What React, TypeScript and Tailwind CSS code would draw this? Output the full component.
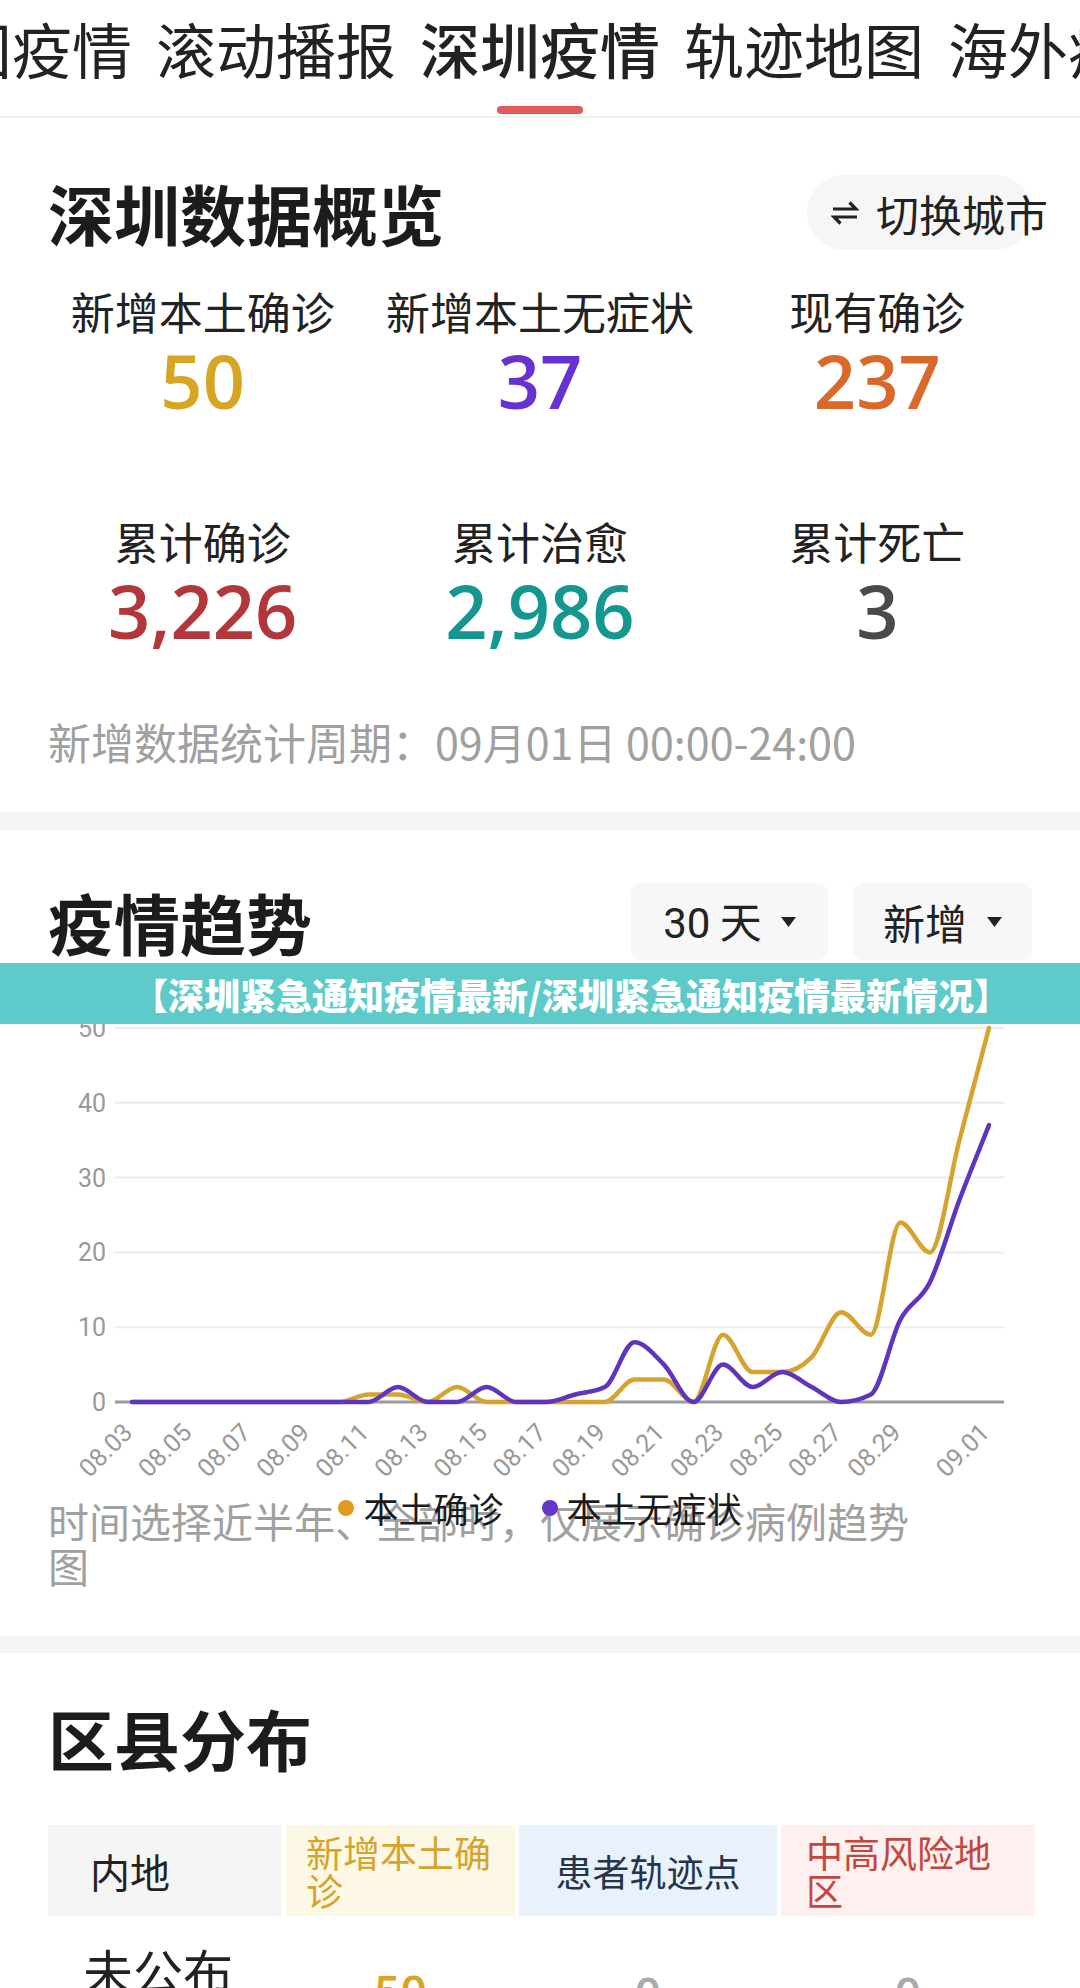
import React from "react";

const gold = [0,0,0,0,0,0,0,0,1,1,0,2,0,0,0,0,0,3,3,0,9,4,4,6,12,9,24,20,35,50];
const purple = [0,0,0,0,0,0,0,0,0,2,0,0,2,0,0,1,2,8,5,0,5,2,4,2,0,1,11,16,27,37];
const dates = ["08.03","08.04","08.05","08.06","08.07","08.08","08.09","08.10","08.11","08.12","08.13","08.14","08.15","08.16","08.17","08.18","08.19","08.20","08.21","08.22","08.23","08.24","08.25","08.26","08.27","08.28","08.29","08.30","08.31","09.01"];

const X0 = 132;
const DX = (989 - 132) / 29;
const Y0 = 402;
const UNIT = 7.48;
const xi = (i: number) => X0 + i * DX;
const yv = (v: number) => Y0 - v * UNIT;

function monotonePath(vals: number[]): string {
  const pts = vals.map((v, i) => [xi(i), yv(v)]);
  const n = pts.length;
  const s: number[] = [];
  for (let k = 0; k < n - 1; k++) {
    s.push((pts[k + 1][1] - pts[k][1]) / (pts[k + 1][0] - pts[k][0]));
  }
  const m: number[] = new Array(n).fill(0);
  m[0] = s[0];
  m[n - 1] = s[n - 2];
  for (let k = 1; k < n - 1; k++) {
    const s0 = s[k - 1];
    const s1 = s[k];
    if (s0 * s1 <= 0) {
      m[k] = 0;
    } else {
      const p = (s0 + s1) / 2;
      m[k] = (Math.sign(s0) + Math.sign(s1)) * Math.min(Math.abs(s0), Math.abs(s1), 0.5 * Math.abs(p));
    }
  }
  let d = `M${pts[0][0].toFixed(1)},${pts[0][1].toFixed(1)}`;
  for (let k = 0; k < n - 1; k++) {
    const h = pts[k + 1][0] - pts[k][0];
    const c1x = pts[k][0] + h / 3;
    const c1y = pts[k][1] + (m[k] * h) / 3;
    const c2x = pts[k + 1][0] - h / 3;
    const c2y = pts[k + 1][1] - (m[k + 1] * h) / 3;
    d += ` C${c1x.toFixed(1)},${c1y.toFixed(1)} ${c2x.toFixed(1)},${c2y.toFixed(1)} ${pts[k + 1][0].toFixed(1)},${pts[k + 1][1].toFixed(1)}`;
  }
  return d;
}

function Chart() {
  const grid = [50, 40, 30, 20, 10];
  const labelIdx = [0, 2, 4, 6, 8, 10, 12, 14, 16, 18, 20, 22, 24, 26, 29];
  return (
    <svg width="1080" height="480" viewBox="0 0 1080 480" className="block">
      {grid.map((g) => (
        <g key={g}>
          <line x1="115" x2="1004" y1={yv(g)} y2={yv(g)} stroke="#ececec" strokeWidth="2" />
          <text x="106" y={yv(g) + 9} textAnchor="end" fontFamily="Roboto" fontSize="25" fill="#999">{g}</text>
        </g>
      ))}
      <line x1="115" x2="1004" y1={Y0} y2={Y0} stroke="#9a9a9a" strokeWidth="3" />
      <text x="106" y={Y0 + 9} textAnchor="end" fontFamily="Roboto" fontSize="25" fill="#999">0</text>
      {labelIdx.map((i) => {
        const x = xi(i) + 2;
        const y = 434;
        return (
          <text key={i} x={x} y={y} textAnchor="end" fontFamily="Roboto" fontSize="25" fill="#999" transform={`rotate(-45 ${x} ${y})`}>
            {dates[i]}
          </text>
        );
      })}
      <path d={monotonePath(gold)} fill="none" stroke="#d6a42e" strokeWidth="4.5" strokeLinejoin="round" strokeLinecap="round" />
      <path d={monotonePath(purple)} fill="none" stroke="#5f35be" strokeWidth="4.5" strokeLinejoin="round" strokeLinecap="round" />
    </svg>
  );
}

function SwapIcon() {
  return (
    <svg width="28" height="28" viewBox="0 0 28 28" fill="none" stroke="#222" strokeWidth="3.2" strokeLinecap="butt" strokeLinejoin="miter" className="shrink-0 block">
      <path d="M2 10 H25 L18.5 3.5" />
      <path d="M26 18 H3 L9.5 24.5" />
    </svg>
  );
}

function Caret() {
  return (
    <svg width="15" height="10" viewBox="0 0 15 10" className="shrink-0 block">
      <path d="M0 0 H15 L7.5 10 Z" fill="#222" />
    </svg>
  );
}

function Stat({ label, value, color }: { label: string; value: string; color: string }) {
  return (
    <div className="flex flex-col items-center">
      <div className="text-[44px] leading-[60px] text-[#222] whitespace-nowrap">{label}</div>
      <div className={`text-[74px] leading-[80px] font-semibold font-['Open_Sans',sans-serif] ${color}`}>{value}</div>
    </div>
  );
}

export default function App() {
  const tabs = ["全国疫情", "滚动播报", "深圳疫情", "轨迹地图", "海外疫情"];
  return (
    <div className="relative w-[1080px] h-[1988px] overflow-hidden bg-white font-['Noto_Sans_CJK_SC',sans-serif] text-[#222]">
      {/* Tab bar */}
      <div className="h-[118px] border-b-2 border-[#f0f0f0] overflow-hidden">
        <div className="flex gap-[24px] ml-[-108px] pt-[18px]">
          {tabs.map((t, i) => (
            <div key={t} className="flex flex-col items-center shrink-0">
              <div className={`text-[60px] leading-[60px] whitespace-nowrap ${i === 2 ? "font-medium" : ""}`}>{t}</div>
              {i === 2 && <div className="mt-[28px] w-[86px] h-[8px] rounded-full bg-[#e25b5b]" />}
            </div>
          ))}
        </div>
      </div>

      {/* Section 1 */}
      <div className="pb-[41px]">
        <div className="mt-[57px] h-[75px] px-[48px] flex items-center justify-between">
          <div className="text-[66px] leading-[75px] font-bold text-[#1c1c1c]">深圳数据概览</div>
          <div className="w-[225px] h-[75px] shrink-0 rounded-full bg-[#f6f6f6] flex items-center pl-[24px] gap-[17px] whitespace-nowrap">
            <SwapIcon />
            <span className="shrink-0 text-[43px] leading-[50px] text-[#222]">切换城市</span>
          </div>
        </div>
        <div className="mt-[31px] px-[34px] grid grid-cols-3 gap-y-[90px]">
          <Stat label="新增本土确诊" value="50" color="text-[#d8a424]" />
          <Stat label="新增本土无症状" value="37" color="text-[#6632d2]" />
          <Stat label="现有确诊" value="237" color="text-[#d8692b]" />
          <Stat label="累计确诊" value="3,226" color="text-[#b3363b]" />
          <Stat label="累计治愈" value="2,986" color="text-[#14978f]" />
          <Stat label="累计死亡" value="3" color="text-[#4a4a4a]" />
        </div>
        <div className="mt-[60px] px-[48px] text-[43px] leading-[60px] text-[#a0a0a0] whitespace-nowrap">
          新增数据统计周期：09月01日 00:00-24:00
        </div>
      </div>

      <div className="h-[18px] bg-[#f5f5f5]" />

      {/* Section 2 */}
      <div className="relative pb-[48px]">
        <div className="mt-[53px] h-[77px] px-[48px] flex items-center justify-between">
          <div className="text-[66px] leading-[77px] font-bold text-[#1c1c1c]">疫情趋势</div>
          <div className="flex gap-[25px]">
            <div className="w-[197px] h-[77px] rounded-[10px] bg-[#f7f7f7] flex items-center justify-center gap-[19px]">
              <span className="text-[42px] leading-[50px]"><span className="font-['Roboto',sans-serif]">30</span> 天</span>
              <Caret />
            </div>
            <div className="w-[179px] h-[77px] rounded-[10px] bg-[#f7f7f7] flex items-center justify-center gap-[20px]">
              <span className="text-[42px] leading-[50px]">新增</span>
              <Caret />
            </div>
          </div>
        </div>
        <div className="relative mt-[40px]">
          <Chart />
          <div className="mt-[18px] ml-[48px] w-[880px] text-[41px] leading-[45px] text-[#a0a0a0]">
            时间选择近半年、全部时，仅展示确诊病例趋势图
          </div>
          <div className="absolute left-0 right-0 top-[490px] h-[36px] flex items-center justify-center gap-[38px]">
            <div className="flex items-center gap-[9px]">
              <span className="w-[16px] h-[16px] rounded-full bg-[#e29a1c]" />
              <span className="text-[35px] leading-[36px] text-[#1a1a1a]">本土确诊</span>
            </div>
            <div className="flex items-center gap-[9px]">
              <span className="w-[16px] h-[16px] rounded-full bg-[#6437cc]" />
              <span className="text-[35px] leading-[36px] text-[#1a1a1a]">本土无症状</span>
            </div>
          </div>
        </div>
      </div>

      <div className="h-[17px] bg-[#f5f5f5]" />

      {/* Section 3 */}
      <div>
        <div className="mt-[47px] h-[75px] px-[48px] flex items-center">
          <div className="text-[66px] leading-[75px] font-bold text-[#1c1c1c]">区县分布</div>
        </div>
        <div className="mt-[50px] ml-[48px] grid grid-cols-[234px_229px_258px_254px] gap-[4px] h-[91px]">
          <div className="bg-[#f5f5f5] flex items-center pl-[42px] text-[40px] leading-[44px] text-[#222]">内地</div>
          <div className="bg-[#fdf8e6] flex items-center px-[20px] text-[37px] leading-[38px] text-[#d6a42a]">新增本土确诊</div>
          <div className="bg-[#e9f1fc] flex items-center justify-center px-[20px] text-[37px] leading-[38px] text-[#24354a]">患者轨迹点</div>
          <div className="bg-[#fdf0ef] flex items-center px-[25px] text-[37px] leading-[38px] text-[#c4463e]">中高风险地区</div>
        </div>
        <div className="mt-[24px] ml-[48px] grid grid-cols-[234px_229px_258px_254px] gap-[4px] items-start">
          <div className="pl-[35px] text-[50px] leading-[60px] text-[#222]">未公布</div>
          <div className="mt-[27px] text-center text-[46px] leading-[46px] font-semibold font-['Open_Sans',sans-serif] text-[#d8a424]">50</div>
          <div className="mt-[29px] text-center text-[46px] leading-[46px] font-semibold font-['Open_Sans',sans-serif] text-[#aaaaaa]">0</div>
          <div className="mt-[29px] text-center text-[46px] leading-[46px] font-semibold font-['Open_Sans',sans-serif] text-[#aaaaaa]">0</div>
        </div>
      </div>

      {/* Overlay banner */}
      <div className="absolute left-0 right-0 top-[963px] h-[61px] bg-[#5ecbca] flex items-center justify-center pl-[62px]">
        <span className="text-[36px] leading-[44px] font-black text-white whitespace-nowrap">【深圳紧急通知疫情最新/深圳紧急通知疫情最新情况】</span>
      </div>
    </div>
  );
}
